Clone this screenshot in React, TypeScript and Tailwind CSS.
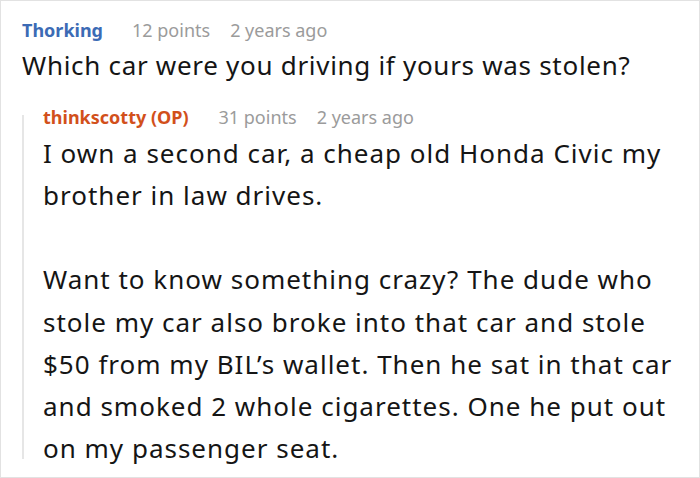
export default function App() {
  return (
    <div className="w-[700px] h-[478px] bg-white border border-[#e2e2e2] overflow-hidden font-['Noto_Sans',sans-serif]">
      <div className="pl-[21px] pt-[17px] pr-[10px]">
        <div className="flex items-baseline text-[18px] leading-[24px]">
          <span className="font-bold text-[#3c6bb5]">Thorking</span>
          <span className="ml-[29px] text-[#9b9b9b]">12 points</span>
          <span className="ml-[20px] text-[#9b9b9b]">2 years ago</span>
        </div>
        <p className="mt-[3px] text-[26px] leading-[41.7px] tracking-[0.7px] text-[#151515]">
          Which car were you driving if yours was stolen?
        </p>
        <div className="mt-[18px] flex">
          <div className="w-[2px] mt-[10px] mb-[10px] bg-[#e6e6e6] shrink-0" />
          <div className="ml-[19px] w-[640px]">
            <div className="flex items-baseline text-[18px] leading-[24px]">
              <span className="font-bold text-[#d2501b]">thinkscotty (OP)</span>
              <span className="ml-[30px] text-[#9b9b9b]">31 points</span>
              <span className="ml-[20px] text-[#9b9b9b]">2 years ago</span>
            </div>
            <div className="mt-[3px] text-[26px] leading-[42.2px] tracking-[1px] text-[#151515]">
              <p>I own a second car, a cheap old Honda Civic my brother in law drives.</p>
              <p className="mt-[42.2px]">
                Want to know something crazy? The dude who stole my car also broke into that car and stole $50 from my BIL’s wallet. Then he sat in that car and smoked 2 whole cigarettes. One he put out on my passenger seat.
              </p>
            </div>
          </div>
        </div>
      </div>
    </div>
  );
}
